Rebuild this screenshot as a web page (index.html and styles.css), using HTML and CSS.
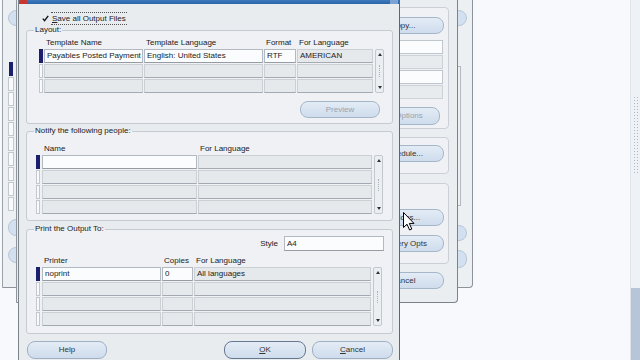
FILE: index.html
```html
<!DOCTYPE html>
<html>
<head>
<meta charset="utf-8">
<link rel="stylesheet" href="styles.css">
</head>
<body>
<div class="desk">

  <div class="win win-c">
    <div class="c-left">
      <div class="c-btn c-btn-1"></div>
      <div class="c-cells">
        <div class="c-cell c-cell-cur"></div>
        <div class="c-cell"></div>
        <div class="c-cell"></div>
        <div class="c-cell"></div>
        <div class="c-cell"></div>
        <div class="c-cell"></div>
        <div class="c-cell"></div>
        <div class="c-cell"></div>
        <div class="c-cell"></div>
        <div class="c-cell"></div>
      </div>
      <div class="c-btn c-btn-2"></div>
      <div class="c-btn c-btn-3"></div>
    </div>
    <div class="c-right">
      <div class="c-rbtn c-rbtn-1"></div>
      <div class="c-frame"></div>
      <div class="c-rbtn c-rbtn-2"></div>
      <div class="c-rbtn c-rbtn-3"></div>
    </div>
  </div>

  <div class="win win-b">
    <div class="b-col">
      <div class="b-frame b-frame-1">
        <div class="btn b-btn b-copy">Copy...</div>
        <div class="b-field b-field-w b-field-first"></div>
        <div class="b-field b-field-g"></div>
        <div class="b-field b-field-w"></div>
        <div class="b-field b-field-g"></div>
        <div class="btn b-btn b-opt btn-dis">Options</div>
      </div>
      <div class="b-frame b-frame-2">
        <div class="btn b-btn b-sched">Schedule...</div>
      </div>
      <div class="b-frame b-frame-3">
        <div class="btn b-btn b-opts2">Options...</div>
        <div class="btn b-btn b-deliv">Delivery Opts</div>
      </div>
      <div class="btn b-btn b-cancel">Cancel</div>
    </div>
  </div>

  <div class="dlg">
    <div class="titlebar"><span class="tb-close"></span><span class="tb-max"></span></div>

    <div class="save-row">
      <svg class="chk" width="7" height="7" viewBox="0 0 7 7"><path d="M0.8 3.6 L2.6 5.6 L6.2 0.9" fill="none" stroke="#111" stroke-width="1.4"/></svg>
      <span class="save-label"><u>S</u>ave all Output Files</span>
    </div>

    <div class="frame frame-layout">
      <div class="frame-label">Layout:</div>
      <div class="tbl tbl-layout">
        <div></div>
        <div class="hdr">Template Name</div>
        <div class="hdr">Template Language</div>
        <div class="hdr">Format</div>
        <div class="hdr">For Language</div>
        <div></div>

        <div class="ind ind-cur"></div>
        <div class="fld fld-w">Payables Posted Payment</div>
        <div class="fld fld-w">English: United States</div>
        <div class="fld fld-w">RTF</div>
        <div class="fld fld-g">AMERICAN</div>
        <div class="sb sb-3"><span class="sb-up"></span><span class="sb-grip"></span><span class="sb-dn"></span></div>

        <div class="ind"></div>
        <div class="fld fld-g"></div>
        <div class="fld fld-g"></div>
        <div class="fld fld-g"></div>
        <div class="fld fld-g"></div>

        <div class="ind"></div>
        <div class="fld fld-g"></div>
        <div class="fld fld-g"></div>
        <div class="fld fld-g"></div>
        <div class="fld fld-g"></div>
      </div>
      <div class="btn btn-preview btn-dis">Preview</div>
    </div>

    <div class="frame frame-notify">
      <div class="frame-label">Notify the following people:</div>
      <div class="tbl tbl-notify">
        <div></div>
        <div class="hdr">Name</div>
        <div class="hdr">For Language</div>
        <div></div>

        <div class="ind ind-cur"></div>
        <div class="fld fld-w"></div>
        <div class="fld fld-g"></div>
        <div class="sb sb-4"><span class="sb-up"></span><span class="sb-grip"></span><span class="sb-dn"></span></div>

        <div class="ind"></div>
        <div class="fld fld-g"></div>
        <div class="fld fld-g"></div>

        <div class="ind"></div>
        <div class="fld fld-g"></div>
        <div class="fld fld-g"></div>

        <div class="ind"></div>
        <div class="fld fld-g"></div>
        <div class="fld fld-g"></div>
      </div>
    </div>

    <div class="frame frame-print">
      <div class="frame-label">Print the Output To:</div>
      <div class="style-row">
        <span class="style-label">Style</span>
        <div class="fld fld-w style-fld">A4</div>
      </div>
      <div class="tbl tbl-print">
        <div></div>
        <div class="hdr">Printer</div>
        <div class="hdr">Copies</div>
        <div class="hdr">For Language</div>
        <div></div>

        <div class="ind ind-cur"></div>
        <div class="fld fld-w">noprint</div>
        <div class="fld fld-w">0</div>
        <div class="fld fld-g">All languages</div>
        <div class="sb sb-4"><span class="sb-up"></span><span class="sb-grip"></span><span class="sb-dn"></span></div>

        <div class="ind"></div>
        <div class="fld fld-g"></div>
        <div class="fld fld-g"></div>
        <div class="fld fld-g"></div>

        <div class="ind"></div>
        <div class="fld fld-g"></div>
        <div class="fld fld-g"></div>
        <div class="fld fld-g"></div>

        <div class="ind"></div>
        <div class="fld fld-g"></div>
        <div class="fld fld-g"></div>
        <div class="fld fld-g"></div>
      </div>
    </div>

    <div class="btn-row">
      <div class="btn btn-help">Help</div>
      <div class="btn-spacer"></div>
      <div class="btn btn-ok"><u>O</u>K</div>
      <div class="btn btn-cancel"><u>C</u>ancel</div>
    </div>
  </div>

  <div class="edge-scroll">
    <div class="es-top"></div>
    <div class="es-grip"></div>
    <div class="es-mid"></div>
    <div class="es-thumb"></div>
  </div>

  <svg class="cursor" width="12" height="19" viewBox="0 0 12 19"><path d="M0.5 0.5 L0.5 15.5 L4 12.2 L6.6 18 L8.8 17 L6.3 11.4 L11 11.4 Z" fill="#fff" stroke="#000" stroke-width="1" stroke-linejoin="round"/></svg>
</div>
</body>
</html>
```

FILE: styles.css
```css
* { box-sizing: border-box; margin: 0; padding: 0; }
html, body { width: 640px; height: 360px; overflow: hidden; }
body {
  background: #f7f9fc;
  font-family: "Liberation Sans", Arial, sans-serif;
  font-size: 8px;
  color: #222;
}
.desk { position: relative; width: 640px; height: 360px; overflow: hidden; }

/* ---------- generic buttons ---------- */
.btn {
  height: 17px;
  border: 1px solid #a6b6c9;
  border-radius: 8px;
  background: linear-gradient(#e3ecf6, #cfdcec);
  color: #333;
  display: flex;
  align-items: center;
  justify-content: center;
  line-height: 10px;
  white-space: nowrap;
  overflow: hidden;
}
.btn-dis { color: #98a3ae; }

/* ---------- window C (far back) ---------- */
.win-c {
  position: absolute;
  left: 2px; top: 0;
  width: 471px; height: 288px;
  background: #edf0f3;
  border-left: 1px solid #9aa1a8;
  border-right: 1px solid #8c939a;
  border-bottom: 1px solid #8c939a;
  border-bottom-right-radius: 4px;
  display: flex;
  justify-content: space-between;
}
.c-left { padding-left: 5px; display: flex; flex-direction: column; }
.c-btn {
  width: 40px;
  border: 1px solid #b8c6d7;
  border-radius: 8px;
  background: #d3e0ef;
}
.c-btn-1 { margin-top: 10px; height: 16px; }
.c-btn-2 { margin-top: 8px; height: 17px; }
.c-btn-3 { margin-top: 11px; height: 16px; }
.c-cells { margin-top: 36px; display: flex; flex-direction: column; gap: 1px; }
.c-cell {
  width: 6px; height: 14px;
  background: #f8f9fb;
  border: 1px solid #c3c8ce;
}
.c-cell-cur { width: 4px; margin-left: 1px; background: #1c1f6e; border-color: #1c1f6e; }
.c-right { padding-right: 5px; display: flex; flex-direction: column; align-items: flex-end; }
.c-rbtn {
  width: 40px;
  border: 1px solid #b8c6d7;
  border-radius: 8px;
  background: #d3e0ef;
}
.c-rbtn-1 { margin-top: 10px; height: 16px; }
.c-rbtn-2 { margin-top: 19px; height: 16px; }
.c-rbtn-3 { margin-top: 9px; height: 18px; }
.c-frame {
  margin-top: 40px;
  margin-right: 6px;
  width: 60px; height: 140px;
  border: 1px solid #b3bac2;
  border-left: none;
}

/* ---------- window B (middle) ---------- */
.win-b {
  position: absolute;
  left: 16px; top: 0;
  width: 442px; height: 303px;
  background: #ebeef1;
  border-left: 1px solid #8f969d;
  border-right: 1px solid #7c838b;
  border-bottom: 1px solid #7c838b;
  border-bottom-right-radius: 4px;
  display: flex;
  justify-content: flex-end;
  padding-right: 8px;
}
.b-col { width: 100px; display: flex; flex-direction: column; align-items: flex-end; }
.b-frame {
  width: 100px;
  border: 1px solid #cbd0d6;
  border-radius: 4px;
  background: #eff1f4;
  display: flex;
  flex-direction: column;
  align-items: flex-end;
}
.b-frame-1 { margin-top: 7px; height: 122px; }
.b-frame-2 { margin-top: 8px; height: 37px; }
.b-frame-3 { margin-top: 9px; height: 81px; }
.b-btn { width: 82px; margin-right: 4px; }
.b-copy { margin-top: 9px; }
.b-opt { width: 62px; margin-right: 8px; margin-top: 8px; height: 18px; }
.b-sched { margin-top: 7px; }
.b-opts2 { margin-top: 25px; }
.b-deliv { margin-top: 9px; }
.b-cancel { margin-top: 8px; margin-right: 5px; }
.b-field { width: 70px; height: 14px; margin-right: 5px; margin-top: 1px; }
.b-field-first { margin-top: 6px; }
.b-field-w { background: #fbfcfd; border: 1px solid #c0c6cd; }
.b-field-g { background: #e8ebee; border: 1px solid #cdd2d7; }

/* ---------- main dialog ---------- */
.dlg {
  position: absolute;
  left: 18px; top: 0;
  width: 382px; height: 360px;
  background: #e9ecef;
  border-left: 1px solid #7b838b;
  border-right: 1px solid #5f666e;
  display: flex;
  flex-direction: column;
}
.titlebar {
  height: 4px;
  background: linear-gradient(#3c79bd, #2b65a8);
  display: flex;
  justify-content: space-between;
}
.tb-close { width: 7px; height: 4px; margin-left: 1px; background: #c8372f; }
.tb-max { width: 8px; height: 4px; margin-right: 1px; background: #7aa3d3; }

.save-row {
  margin-top: 7px;
  margin-left: 23px;
  height: 14px;
  display: flex;
  align-items: center;
}
.chk { display: block; margin-right: 2px; }
.save-label {
  display: block;
  height: 13px;
  line-height: 11px;
  padding: 0 1px;
  border-top: 1px dotted #555;
  border-bottom: 1px dotted #555;
  color: #222;
}
.save-label u, .btn u { text-decoration: underline; text-underline-offset: 1px; }

.frame {
  margin-left: 7px;
  width: 367px;
  border: 1px solid #c6cbd1;
  border-radius: 3px;
  background: #eff1f4;
  display: flex;
  flex-direction: column;
}
.frame-layout { margin-top: 5px; height: 94px; }
.frame-notify { margin-top: 7px; height: 90px; }
.frame-print { margin-top: 8px; height: 105px; }
.frame-label {
  margin-top: -6px;
  margin-left: 7px;
  height: 10px;
  line-height: 10px;
  padding: 0 1px;
  align-self: flex-start;
  background: linear-gradient(#e9ecef 50%, #eff1f4 50%);
  color: #222;
}

.tbl { display: grid; column-gap: 1px; row-gap: 1px; }
.tbl-layout {
  margin-top: 3px;
  margin-left: 12px;
  grid-template-columns: 4px 99px 119px 32px 76px 10px;
  grid-template-rows: 10px repeat(3, 14px);
}
.tbl-notify {
  margin-top: 8px;
  margin-left: 9px;
  grid-template-columns: 5px 155px 174px 10px;
  grid-template-rows: 10px repeat(4, 14px);
}
.tbl-print {
  margin-top: 5px;
  margin-left: 9px;
  grid-template-columns: 5px 119px 31px 177px 10px;
  grid-template-rows: 10px repeat(4, 14px);
}
.hdr { line-height: 10px; padding-left: 2px; white-space: nowrap; color: #222; }

.ind { width: 4px; background: #f9fafb; border: 1px solid #c2c7cd; }
.ind-cur { background: #1c1f6e; border-color: #1c1f6e; }

.fld {
  height: 14px;
  line-height: 12px;
  padding-left: 2px;
  white-space: nowrap;
  overflow: hidden;
  color: #222;
}
.fld-w {
  background: #fbfcfd;
  border: 1px solid #b3b9c0;
  border-bottom-color: #959ca4;
}
.fld-g {
  background: #e6e9ec;
  border: 1px solid #cbd0d5;
  border-bottom-color: #a4aab1;
}

.sb {
  margin-left: 1px;
  width: 9px;
  border: 1px solid #c3c8ce;
  border-radius: 2px;
  background: #eceff2;
  display: flex;
  flex-direction: column;
  align-items: center;
  justify-content: space-between;
  padding: 3px 0;
}
.sb-3 { grid-row: 2 / span 3; grid-column: 6; }
.tbl-notify .sb-4 { grid-row: 2 / span 4; grid-column: 4; }
.tbl-print .sb-4 { grid-row: 2 / span 4; grid-column: 5; }
.sb-up { width: 0; height: 0; border-left: 2.5px solid transparent; border-right: 2.5px solid transparent; border-bottom: 3px solid #333; }
.sb-dn { width: 0; height: 0; border-left: 2.5px solid transparent; border-right: 2.5px solid transparent; border-top: 3px solid #333; }
.sb-grip { width: 1px; height: 12px; border-left: 1px dotted #a7aeb6; }

.btn-preview { width: 80px; align-self: flex-end; margin-right: 12px; margin-top: 8px; }

.style-row {
  margin-top: 2px;
  margin-right: 8px;
  height: 15px;
  display: flex;
  justify-content: flex-end;
  align-items: center;
}
.style-label { margin-right: 6px; line-height: 10px; }
.style-fld { width: 100px; height: 15px; line-height: 13px; }

.btn-row { margin-top: 7px; height: 18px; display: flex; padding-right: 6px; }
.btn-row .btn { height: 18px; }
.btn-help { width: 80px; margin-left: 8px; border-color: #9fb0c4; }
.btn-spacer { flex: 1; }
.btn-ok { width: 82px; border-color: #66788f; }
.btn-cancel { width: 81px; margin-left: 6px; border-color: #9fb0c4; }

/* ---------- right edge scroll ---------- */
.edge-scroll {
  position: absolute;
  left: 630px; top: 0;
  width: 10px; height: 360px;
  border-left: 1px solid #dfe4ea;
  background: #eef2f6;
  display: flex;
  flex-direction: column;
}
.es-top { height: 96px; }
.es-grip {
  height: 78px;
  margin-left: 2px;
  width: 6px;
  background-image: radial-gradient(circle, #a9b8cb 0.6px, transparent 0.9px);
  background-size: 3px 3px;
}
.es-mid { flex: 1; }
.es-thumb { height: 72px; background: #b7c5d8; }

.cursor { position: absolute; left: 403px; top: 212px; }
```
